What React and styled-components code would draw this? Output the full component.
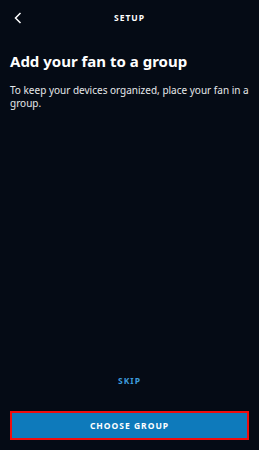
import React from 'react';
import styled, { createGlobalStyle } from 'styled-components';

const GlobalStyle = createGlobalStyle`
  html, body {
    margin: 0;
    padding: 0;
    background: #050b15;
  }
  body {
    font-family: "Noto Sans", "DejaVu Sans", sans-serif;
  }
`;

const Screen = styled.div`
  width: 259px;
  height: 450px;
  background: #050b15;
  color: #ffffff;
  display: flex;
  flex-direction: column;
  box-sizing: border-box;
`;

const Header = styled.div`
  height: 34px;
  display: grid;
  grid-template-columns: 40px 1fr 40px;
  align-items: center;
`;

const BackButton = styled.div`
  display: flex;
  align-items: center;
  padding-left: 14px;
  padding-top: 1px;
`;

const HeaderTitle = styled.div`
  text-align: center;
  font-size: 8.5px;
  font-weight: 700;
  letter-spacing: 1px;
`;

const Content = styled.div`
  padding: 16px 10px 0;
  flex: 1;
`;

const Title = styled.h1`
  margin: 0;
  font-size: 15px;
  font-weight: 700;
  line-height: 22px;
`;

const Text = styled.p`
  margin: 12px 0 0;
  font-size: 10px;
  line-height: 13px;
  color: #e6e8ea;
`;

const Footer = styled.div`
  display: flex;
  flex-direction: column;
  align-items: center;
  padding: 0 10px 10px;
`;

const SkipLink = styled.div`
  font-size: 8.5px;
  font-weight: 700;
  letter-spacing: 1px;
  color: #3d9bdc;
  margin-bottom: 25px;
`;

const PrimaryButton = styled.div`
  width: 100%;
  height: 29px;
  box-sizing: border-box;
  border: 2px solid #f00d0d;
  background: #0e7abb;
  display: flex;
  align-items: center;
  justify-content: center;
  font-size: 8.5px;
  font-weight: 700;
  letter-spacing: 1px;
`;

function App() {
  return (
    <>
      <GlobalStyle />
      <Screen>
        <Header>
          <BackButton>
            <svg width="8" height="12" viewBox="0 0 8 12">
              <path d="M6.5 1 L1.5 6 L6.5 11" stroke="#fff" strokeWidth="1.5" fill="none" />
            </svg>
          </BackButton>
          <HeaderTitle>SETUP</HeaderTitle>
          <div />
        </Header>
        <Content>
          <Title>Add your fan to a group</Title>
          <Text>To keep your devices organized, place your fan in a group.</Text>
        </Content>
        <Footer>
          <SkipLink>SKIP</SkipLink>
          <PrimaryButton>CHOOSE GROUP</PrimaryButton>
        </Footer>
      </Screen>
    </>
  );
}

export default App;
